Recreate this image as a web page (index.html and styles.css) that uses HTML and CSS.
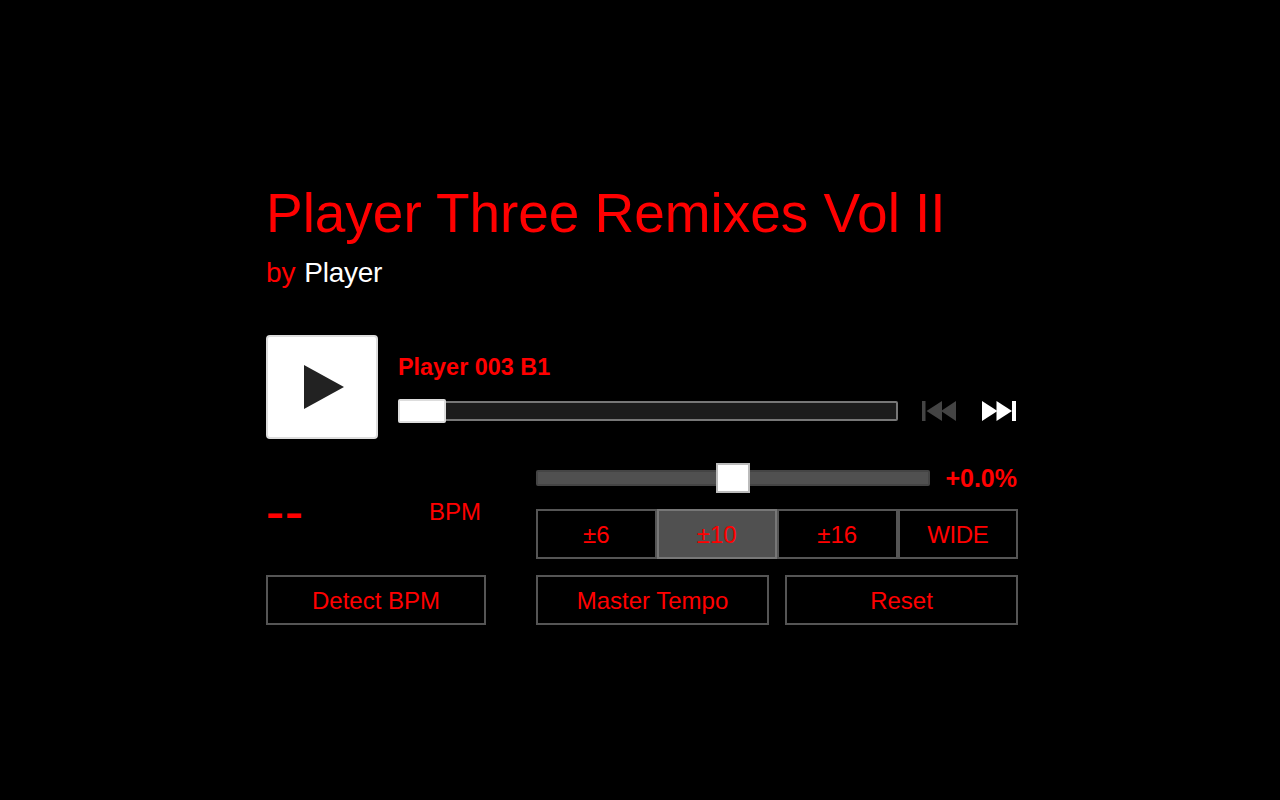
FILE: index.html
```html
<!DOCTYPE html>
<html lang="en">
<head>
  <meta charset="UTF-8">
  <meta name="viewport" content="width=device-width, initial-scale=1.0">
  <title>Player Three Remixes Vol II</title>
  <link rel="stylesheet" href="styles.css">
</head>
<body>
  <div class="player-container">
    <h1>Player Three Remixes Vol II</h1>
    <div class="artist">by <span class="artist-name">Player</span></div>

    <div class="deck">
      <button class="play-button" aria-label="Play">
        <svg width="40" height="44" viewBox="0 0 40 44"><polygon points="0,0 40,22 0,44" fill="#222"/></svg>
      </button>
      <div class="track-info">
        <div class="track-name">Player 003 B1</div>
        <div class="track-row">
          <div class="scrubber"><div class="scrubber-thumb"></div></div>
          <button class="skip skip-prev" aria-label="Previous">
            <svg width="34" height="20" viewBox="0 0 34 20"><rect x="0" y="0" width="3.5" height="20"/><polygon points="4.5,10 20,0 20,20"/><polygon points="19,10 34,0 34,20"/></svg>
          </button>
          <button class="skip skip-next" aria-label="Next">
            <svg width="34" height="20" viewBox="0 0 34 20"><polygon points="0,0 15.5,10 0,20"/><polygon points="14.5,0 30,10 14.5,20"/><rect x="30" y="0" width="4" height="20"/></svg>
          </button>
        </div>
      </div>
    </div>

    <div class="controls">
      <div class="bpm-col">
        <div class="bpm-readout">
          <span class="bpm-value">--</span>
          <span class="bpm-label">BPM</span>
        </div>
        <button class="btn">Detect BPM</button>
      </div>
      <div class="tempo-col">
        <div class="tempo-row">
          <div class="tempo-slider"><div class="tempo-thumb"></div></div>
          <span class="tempo-value">+0.0%</span>
        </div>
        <div class="range-group">
          <button class="btn">±6</button>
          <button class="btn active">±10</button>
          <button class="btn">±16</button>
          <button class="btn btn-wide">WIDE</button>
        </div>
        <div class="tempo-buttons">
          <button class="btn">Master Tempo</button>
          <button class="btn">Reset</button>
        </div>
      </div>
    </div>
  </div>
</body>
</html>
```

FILE: styles.css
```css
body {
  font-family: 'Liberation Sans', Arial, sans-serif;
  background-color: #000;
  color: #f00;
  margin: 0;
  height: 800px;
  display: flex;
  justify-content: center;
  overflow: hidden;
}

.player-container {
  width: 752px;
  margin-left: 4px;
  padding-top: 177px;
  box-sizing: border-box;
}

h1 {
  font-size: 55px;
  font-weight: normal;
  letter-spacing: -0.04px;
  line-height: 72px;
  margin: 0;
}

.artist {
  font-size: 28px;
  line-height: 32px;
  margin-top: 8px;
  word-spacing: 1px;
}

.artist-name {
  color: #fff;
  letter-spacing: -0.3px;
}

.deck {
  display: flex;
  margin-top: 46px;
}

.play-button {
  width: 112px;
  height: 104px;
  background-color: #fff;
  border: 2px solid #ddd;
  border-radius: 4px;
  padding: 0;
  display: flex;
  align-items: center;
  justify-content: center;
  flex-shrink: 0;
}

.play-button svg {
  margin-left: 4px;
}

.track-info {
  margin-left: 20px;
  flex: 1;
}

.track-name {
  font-size: 23.4px;
  font-weight: bold;
  line-height: 30px;
  margin-top: 17px;
}

.track-row {
  display: flex;
  align-items: center;
  margin-top: 19px;
}

.scrubber {
  position: relative;
  width: 500px;
  height: 20px;
  background-color: #1c1c1c;
  border: 2px solid #777;
  border-radius: 2px;
  box-sizing: border-box;
}

.scrubber-thumb {
  position: absolute;
  left: -2px;
  top: -4px;
  width: 48px;
  height: 24px;
  background-color: #fff;
  border: 2px solid #ddd;
  border-radius: 2px;
  box-sizing: border-box;
}

.skip {
  background: none;
  border: none;
  padding: 0;
  display: flex;
}

.skip-prev {
  margin-left: 24px;
  fill: #444;
}

.skip-next {
  margin-left: 26px;
  fill: #fff;
}

.controls {
  display: flex;
  margin-top: 24px;
}

.bpm-col {
  width: 220px;
  padding-top: 32px;
}

.bpm-readout {
  display: flex;
  justify-content: space-between;
  align-items: center;
  height: 32px;
  padding-right: 5px;
  margin-bottom: 48px;
}

.bpm-value {
  display: inline-block;
  font-size: 36px;
  font-weight: bold;
  letter-spacing: 0.67px;
  margin-top: 3px;
  transform: scaleX(1.5);
  transform-origin: left;
}

.bpm-label {
  font-size: 24px;
  margin-top: 2px;
}

.tempo-col {
  width: 482px;
  margin-left: 50px;
}

.tempo-row {
  display: flex;
  align-items: center;
  justify-content: space-between;
  height: 30px;
}

.tempo-slider {
  position: relative;
  width: 394px;
  height: 16px;
  background-color: #505050;
  border: 2px solid #444;
  border-radius: 2px;
  box-sizing: border-box;
}

.tempo-thumb {
  position: absolute;
  left: 178px;
  top: -9px;
  width: 34px;
  height: 30px;
  background-color: #fff;
  border: 2px solid #bbb;
  box-sizing: border-box;
}

.tempo-value {
  font-size: 25px;
  font-weight: bold;
  margin-right: 1px;
}

.btn {
  height: 50px;
  background-color: #000;
  color: #f00;
  border: 2px solid #555;
  font-family: inherit;
  font-size: 24px;
  padding: 2px 0 0;
}

.btn-wide {
  letter-spacing: -0.4px;
}

.btn.active {
  background-color: #505050;
  border-color: #777;
}

.range-group {
  display: grid;
  grid-template-columns: repeat(4, 1fr);
  margin-top: 16px;
}

.bpm-col .btn {
  width: 100%;
}

.tempo-buttons {
  display: grid;
  grid-template-columns: 1fr 1fr;
  gap: 16px;
  margin-top: 16px;
}
```
